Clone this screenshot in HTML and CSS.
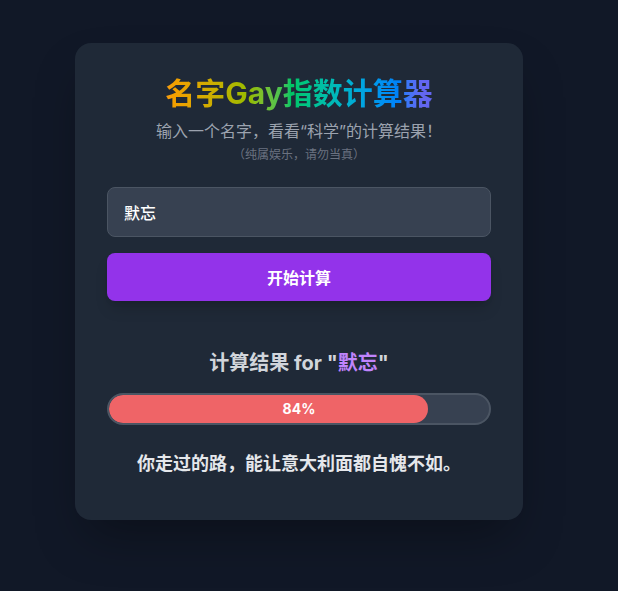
FILE: index.html
```html
<!DOCTYPE html>
<html lang="zh-CN">
<head>
<meta charset="utf-8">
<title>名字Gay指数计算器</title>
<link rel="stylesheet" href="styles.css">
</head>
<body>
<main class="page">
  <section class="card">
    <header class="header">
      <h1 class="title"><span class="title-text">名字Gay指数计算器</span></h1>
      <p class="subtitle">输入一个名字，看看“科学”的计算结果！</p>
      <p class="note">（纯属娱乐，请勿当真）</p>
    </header>
    <form class="form">
      <input class="name-input" type="text" value="默忘">
      <button class="calc-btn" type="button">开始计算</button>
    </form>
    <div class="result">
      <h2 class="result-title">计算结果 for "<span class="result-name">默忘</span>"</h2>
      <div class="bar">
        <div class="bar-fill" style="width: 84%;"></div>
        <span class="bar-label">84%</span>
      </div>
      <p class="comment">你走过的路，能让意大利面都自愧不如。</p>
    </div>
  </section>
</main>
</body>
</html>
```

FILE: styles.css
```css
* { box-sizing: border-box; }
html, body {
  margin: 0;
  padding: 0;
  background: #111827;
  font-family: Inter, "Noto Sans CJK SC", sans-serif;
  color: #e5e7eb;
}
.page {
  min-height: 591px;
  display: flex;
  justify-content: center;
  align-items: flex-start;
  padding: 43px 20px 0 0;
}
.card {
  width: 448px;
  background: #1f2937;
  border-radius: 16px;
  padding: 32px 32px 42px;
  box-shadow: 0 25px 50px -12px rgba(0, 0, 0, 0.35);
}
.header { text-align: center; }
.title {
  margin: 0;
  font-size: 30px;
  line-height: 36px;
  font-weight: 700;
}
.title-text {
  display: inline-block;
  background-image: linear-gradient(to right in oklch, #f59e0b 2%, #22c55e 46%, #6366f1 96%);
  -webkit-background-clip: text;
  background-clip: text;
  color: transparent;
}
.subtitle {
  margin: 8px 0 0;
  font-size: 16px;
  line-height: 24px;
  color: #9ca3af;
}
.note {
  margin: 4px 0 0;
  font-size: 12px;
  line-height: 16px;
  color: #6b7280;
}
.form {
  margin-top: 24px;
  display: flex;
  flex-direction: column;
  gap: 16px;
}
.name-input {
  display: block;
  width: 100%;
  height: 50px;
  padding: 12px 16px;
  background: #374151;
  border: 1px solid #4b5563;
  border-radius: 8px;
  color: #ffffff;
  font-family: Inter, "Noto Sans CJK SC", sans-serif;
  font-size: 16px;
  font-weight: 500;
  outline: none;
}
.calc-btn {
  display: block;
  width: 100%;
  height: 48px;
  border: none;
  border-radius: 8px;
  background: #9333ea;
  color: #ffffff;
  font-family: Inter, "Noto Sans CJK SC", sans-serif;
  font-size: 16px;
  font-weight: 700;
  box-shadow: 0 10px 15px -3px rgba(0, 0, 0, 0.15), 0 4px 6px -4px rgba(0, 0, 0, 0.15);
}
.result {
  margin-top: 48px;
  text-align: center;
}
.result-title {
  margin: 0;
  font-size: 20px;
  line-height: 28px;
  font-weight: 700;
  color: #d1d5db;
}
.result-name { color: #c084fc; }
.bar {
  position: relative;
  margin-top: 16px;
  height: 32px;
  background: #374151;
  border: 2px solid #4b5563;
  border-radius: 9999px;
  overflow: hidden;
}
.bar-fill {
  height: 100%;
  background: #ef6467;
  border-radius: 9999px;
}
.bar-label {
  position: absolute;
  inset: 0;
  color: #ffffff;
  font-size: 14px;
  font-weight: 700;
  line-height: 28px;
  text-align: center;
}
.comment {
  margin: 25px 0 0;
  font-size: 18px;
  line-height: 28px;
  font-weight: 700;
  color: #e5e7eb;
}
```
